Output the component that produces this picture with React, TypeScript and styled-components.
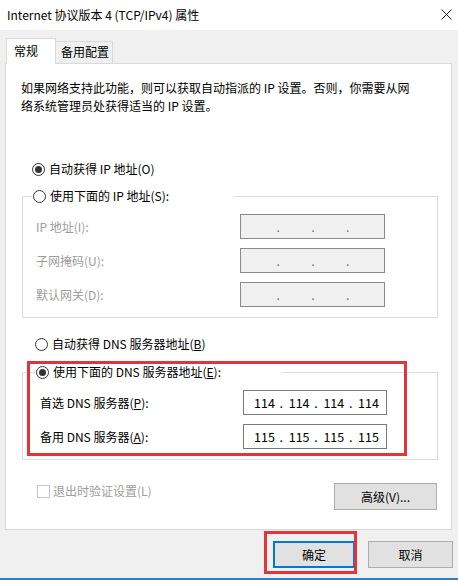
import styled, { createGlobalStyle } from "styled-components";

const GlobalStyle = createGlobalStyle`
  html, body {
    margin: 0;
    padding: 0;
    background: #f0f0f0;
  }
  body {
    font-family: "Noto Sans CJK SC", "Noto Sans", sans-serif;
    font-size: 12px;
    line-height: 18px;
    color: #000;
  }
`;

const ipRows = [
  { label: "IP 地址(I):" },
  { label: "子网掩码(U):" },
  { label: "默认网关(D):" },
];

const dnsRows = [
  { head: "首选 DNS 服务器(", key: "P", value: ["114", "114", "114", "114"] },
  { head: "备用 DNS 服务器(", key: "A", value: ["115", "115", "115", "115"] },
];

const IpField = ({ octets, disabled }: { octets: string[]; disabled?: boolean }) => (
  <IpBox $disabled={disabled}>
    {octets.map((o, i) => (
      <>
        {i > 0 && <Dot key={"d" + i}>.</Dot>}
        <Octet key={"o" + i}>{o}</Octet>
      </>
    ))}
  </IpBox>
);

const Radio = ({ checked, label }: { checked?: boolean; label: React.ReactNode }) => (
  <RadioRow>
    <RadioDot $checked={checked} />
    <span>{label}</span>
  </RadioRow>
);

const App = () => {
  return (
    <Window>
      <GlobalStyle />
      <TitleBar>
        <Title>Internet 协议版本 4 (TCP/IPv4) 属性</Title>
        <CloseButton>
          <svg width="11" height="11" viewBox="0 0 11 11">
            <path d="M0.5 0.5 L10.5 10.5 M10.5 0.5 L0.5 10.5" stroke="#222" strokeWidth="1" fill="none" />
          </svg>
        </CloseButton>
      </TitleBar>

      <Body>
        <TabStrip>
          <Tab $active>常规</Tab>
          <Tab>备用配置</Tab>
        </TabStrip>

        <Panel>
          <Description>
            如果网络支持此功能，则可以获取自动指派的 IP 设置。否则，你需要从网
            <br />
            络系统管理员处获得适当的 IP 设置。
          </Description>

          <TopRadio>
            <Radio checked label="自动获得 IP 地址(O)" />
          </TopRadio>

          <GroupBox $labelPad={13} $top={9}>
            <GroupLegend $width={201} $shift={-4}>
              <Radio label="使用下面的 IP 地址(S):" />
            </GroupLegend>
            <FieldGrid $labelCol={204} $inputCol={145}>
              {ipRows.map((r) => (
                <>
                  <FieldLabel key={r.label} $disabled>{r.label}</FieldLabel>
                  <IpField key={r.label + "f"} octets={["", "", "", ""]} disabled />
                </>
              ))}
            </FieldGrid>
          </GroupBox>

          <DnsRadio>
            <Radio label={<>自动获得 DNS 服务器地址(<Key>B</Key>)</>} />
          </DnsRadio>

          <DnsArea>
            <GroupBox $labelPad={17} $top={0}>
              <GroupLegend $width={246} $shift={-5}>
                <Radio checked label={<>使用下面的 DNS 服务器地址(<Key>E</Key>):</>} />
              </GroupLegend>
              <FieldGrid $labelCol={203} $inputCol={144}>
                {dnsRows.map((r) => (
                  <>
                    <FieldLabel key={r.key}>
                      {r.head}
                      <Key>{r.key}</Key>):
                    </FieldLabel>
                    <IpField key={r.key + "f"} octets={r.value} />
                  </>
                ))}
              </FieldGrid>
            </GroupBox>
            <Annotation $top={-2} $left={21} $width={380} $height={95} />
          </DnsArea>

          <OptionsRow>
            <CheckRow>
              <CheckBox />
              <span>退出时验证设置(L)</span>
            </CheckRow>
            <PushButton $width={103}>高级(V)...</PushButton>
          </OptionsRow>
        </Panel>

        <Footer>
          <ButtonSlot>
            <PushButton $width={82} $focused>确定</PushButton>
            <Annotation $top={-10} $left={-9} $width={93} $height={43} />
          </ButtonSlot>
          <PushButton $width={85}>取消</PushButton>
        </Footer>
      </Body>
    </Window>
  );
};

export default App;

const Window = styled.div`
  width: 458px;
  height: 580px;
  box-sizing: border-box;
  display: flex;
  flex-direction: column;
  background: #f0f0f0;
  border-bottom: 2px solid #2b7dc9;
  overflow: hidden;
`;

const TitleBar = styled.div`
  height: 30px;
  flex: none;
  background: #fff;
  display: flex;
  align-items: center;
  justify-content: space-between;
  padding: 0 6px 0 7px;
`;

const Title = styled.div`
  font-size: 12px;
  color: #000;
`;

const CloseButton = styled.div`
  width: 11px;
  height: 11px;
  display: flex;
  margin-top: -1px;
`;

const Body = styled.div`
  flex: 1;
  display: flex;
  flex-direction: column;
  padding: 8px 6px 0 5px;
  border-left: 1px solid #7a7a7a;
  margin-left: -1px;
`;

const TabStrip = styled.div`
  display: flex;
  align-items: flex-end;
  padding-left: 1px;
  height: 25px;
`;

const Tab = styled.div<{ $active?: boolean }>`
  box-sizing: border-box;
  height: ${(p) => (p.$active ? "26px" : "22px")};
  margin-bottom: ${(p) => (p.$active ? "-1px" : "0")};
  padding: ${(p) => (p.$active ? "3px 0 0 7px" : "1px 0 0 5px")};
  width: ${(p) => (p.$active ? "50px" : "57px")};
  background: ${(p) => (p.$active ? "#fff" : "#f0f0f0")};
  border: 1px solid #d9d9d9;
  border-bottom: none;
  border-left: ${(p) => (p.$active ? "1px solid #d9d9d9" : "none")};
  position: relative;
  z-index: ${(p) => (p.$active ? 1 : 0)};
`;

const Panel = styled.div`
  width: 447px;
  box-sizing: border-box;
  height: 467px;
  background: #fff;
  border: 1px solid #d9d9d9;
  display: flex;
  flex-direction: column;
`;

const Description = styled.div`
  margin: 15px 0 0 15px;
  line-height: 18px;
  white-space: nowrap;
`;

const RadioRow = styled.div`
  display: flex;
  align-items: center;
  height: 18px;
  gap: 4px;
  white-space: nowrap;
`;

const RadioDot = styled.span<{ $checked?: boolean }>`
  width: 13px;
  height: 13px;
  box-sizing: border-box;
  border-radius: 50%;
  border: 1px solid #333;
  background: #fff;
  display: flex;
  align-items: center;
  justify-content: center;
  flex: none;
  &::after {
    content: "";
    width: 7px;
    height: 7px;
    border-radius: 50%;
    background: ${(p) => (p.$checked ? "#333" : "transparent")};
  }
`;

const TopRadio = styled.div`
  margin: 45px 0 0 26px;
`;

const DnsRadio = styled.div`
  margin: 17px 0 0 29px;
`;

const GroupBox = styled.fieldset<{ $labelPad: number; $top: number }>`
  margin: ${(p) => p.$top}px 13px 0 16px;
  padding: 9px 0 10px ${(p) => p.$labelPad}px;
  border: 1px solid #dcdcdc;
  min-width: 0;
`;

const GroupLegend = styled.legend<{ $width: number; $shift: number }>`
  width: ${(p) => p.$width}px;
  margin-left: ${(p) => p.$shift}px;
  padding: 0 0 0 1px;
  background: #fff;
`;

const FieldGrid = styled.div<{ $labelCol: number; $inputCol: number }>`
  display: grid;
  grid-template-columns: ${(p) => p.$labelCol}px ${(p) => p.$inputCol}px;
  row-gap: 9px;
  align-items: center;
`;

const FieldLabel = styled.div<{ $disabled?: boolean }>`
  color: ${(p) => (p.$disabled ? "#9d9d9d" : "#000")};
  white-space: nowrap;
`;

const IpBox = styled.div<{ $disabled?: boolean }>`
  height: 25px;
  box-sizing: border-box;
  border: 1px solid ${(p) => (p.$disabled ? "#8a8a8a" : "#7a7a7a")};
  background: ${(p) => (p.$disabled ? "#f0f0f0" : "#fff")};
  color: ${(p) => (p.$disabled ? "#777" : "#000")};
  display: flex;
  align-items: center;
  padding-left: 10px;
  font-size: 12.5px;
`;

const Octet = styled.span`
  width: 20px;
  text-align: center;
`;

const Dot = styled.span`
  width: 14.7px;
  text-align: center;
`;

const DnsArea = styled.div`
  position: relative;
  margin-top: 10px;
`;

const Annotation = styled.div<{ $top: number; $left: number; $width: number; $height: number }>`
  position: absolute;
  top: ${(p) => p.$top}px;
  left: ${(p) => p.$left}px;
  width: ${(p) => p.$width}px;
  height: ${(p) => p.$height}px;
  box-sizing: border-box;
  border: 3px solid #e5333c;
  pointer-events: none;
`;

const Key = styled.span`
  text-decoration: underline;
`;

const OptionsRow = styled.div`
  display: flex;
  justify-content: space-between;
  align-items: flex-start;
  margin: 23px 14px 0 31px;
`;

const CheckRow = styled.div`
  display: flex;
  align-items: center;
  gap: 3px;
  color: #9d9d9d;
  margin-top: -1px;
  height: 18px;
`;

const CheckBox = styled.span`
  width: 13px;
  height: 13px;
  box-sizing: border-box;
  border: 1px solid #c4c4c4;
  background: #fff;
`;

const PushButton = styled.div<{ $width: number; $focused?: boolean }>`
  width: ${(p) => p.$width}px;
  height: 27px;
  box-sizing: border-box;
  display: flex;
  align-items: center;
  justify-content: center;
  background: #e1e1e1;
  border: ${(p) => (p.$focused ? "2px solid #0078d7" : "1px solid #adadad")};
`;

const Footer = styled.div`
  display: flex;
  justify-content: flex-end;
  gap: 13px;
  margin-top: 11px;
  margin-right: -1px;
`;

const ButtonSlot = styled.div`
  position: relative;
`;
